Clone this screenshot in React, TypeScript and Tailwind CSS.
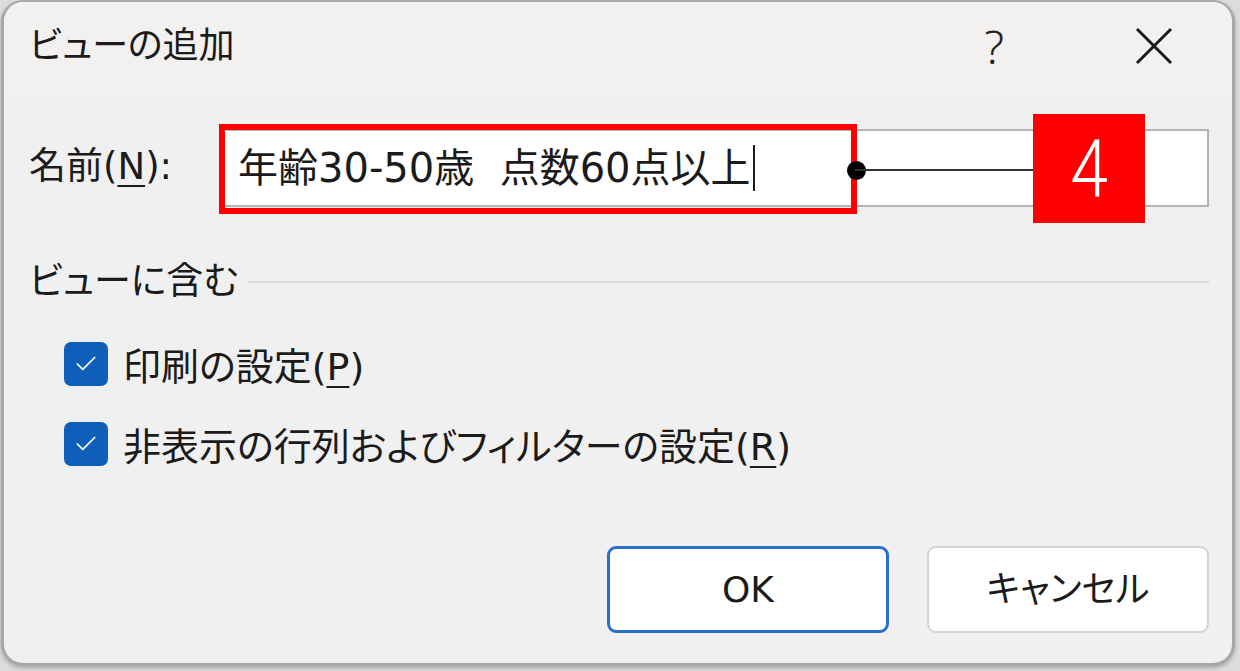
import { Check } from "lucide-react";

const jp = "font-['DejaVu_Sans','Noto_Sans_CJK_JP',sans-serif] [font-feature-settings:'palt']";

function CheckRow(props: { label: string; accel: string }) {
  return (
    <div className="flex items-center gap-[15px] h-[44px]">
      <div className="w-[44px] h-[44px] rounded-[7px] bg-[#0e5fb9] flex items-center justify-center">
        <Check size={26} strokeWidth={1.6} className="text-white" />
      </div>
      <span className="text-[38px] leading-none text-[#1b1b1b] pt-[6px]">
        {props.label}(<span className="underline underline-offset-[6px] decoration-2">{props.accel}</span>)
      </span>
    </div>
  );
}

export default function App() {
  return (
    <div className={`w-[1240px] h-[671px] bg-[#dcdcdc] overflow-hidden ${jp}`}>
      <div className="ml-[1px] w-[1234px] h-[666px] rounded-[22px] border-[3px] border-t-[2px] border-[#a8a8a8] bg-[#f0f0f0] overflow-hidden flex flex-col shadow-[0_2px_4px_rgba(0,0,0,0.25)]">
        {/* title bar */}
        <div className="h-[97px] bg-[#f3f1f0] flex items-center pl-[25px] pr-[58px] pb-[10px]">
          <span className="text-[36px] leading-none text-[#1b1b1b] flex-1">ビューの追加</span>
          <span className="font-['Noto_Sans',sans-serif] text-[46px] leading-none font-light text-[#222] mr-[130px]">?</span>
          <svg width="40" height="40" viewBox="0 0 40 40">
            <path d="M3 3 L37 37 M37 3 L3 37" stroke="#1b1b1b" strokeWidth="3" />
          </svg>
        </div>

        {/* body */}
        <div className="flex-1 pl-[25px] pr-[23px] text-[#1b1b1b]">
          <div className="flex items-center mt-[30px]">
            <span className="text-[37px] leading-none w-[194px] pb-[4px]">
              名前(<span className="underline underline-offset-[6px] decoration-2">N</span>):
            </span>
            <div className="relative flex-1 h-[78px] bg-white border-2 border-[#b4b4b4] flex items-center pl-[13px]">
              <span className="text-[40px] leading-none whitespace-pre">年齢30-50歳  点数60点以上</span>
              <span className="w-[2px] h-[46px] bg-[#1b1b1b] ml-[2px]" />
              {/* annotation */}
              <div className="absolute left-[-6px] top-[-7px] w-[638px] h-[90px] border-[6px] border-[#ff0000]" />
              <div className="absolute left-[622px] top-[30px] w-[19px] h-[19px] rounded-full bg-black" />
              <div className="absolute left-[630px] top-[38px] w-[180px] h-[2px] bg-[#333]" />
              <div className="absolute left-[808px] top-[-17px] w-[112px] h-[109px] bg-[#ff0000] flex items-center justify-center">
                <span className="font-['Roboto',sans-serif] font-light text-[80px] leading-none text-white scale-x-[0.85]">4</span>
              </div>
            </div>
          </div>

          <div className="flex items-center mt-[56px] gap-[10px]">
            <span className="text-[37px] leading-none">ビューに含む</span>
            <div className="flex-1 h-[2px] bg-[#d9d9d9]" />
          </div>

          <div className="flex flex-col gap-[36px] mt-[42px] pl-[35px]">
            <CheckRow label="印刷の設定" accel="P" />
            <CheckRow label="非表示の行列およびフィルターの設定" accel="R" />
          </div>

          <div className="flex justify-end gap-[38px] mt-[80px]">
            <button className="w-[282px] h-[87px] rounded-[9px] bg-white border-[3px] border-[#2a6fc9] text-[36px] leading-none text-[#1b1b1b]">
              OK
            </button>
            <button className="w-[282px] h-[87px] rounded-[9px] bg-white border-2 border-[#d4d4d4] text-[36px] leading-none text-[#1b1b1b]">
              キャンセル
            </button>
          </div>
        </div>
      </div>
    </div>
  );
}
